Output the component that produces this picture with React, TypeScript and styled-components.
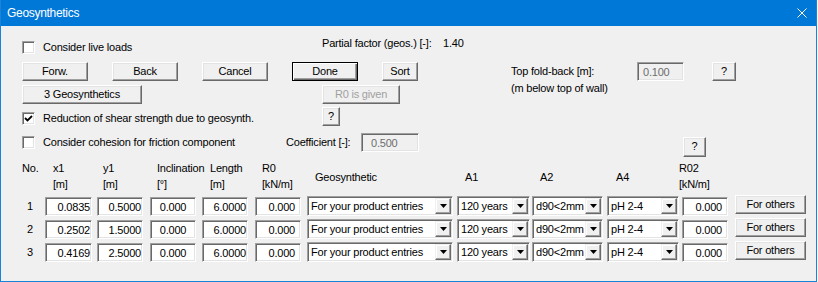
import styled, { createGlobalStyle } from "styled-components";

const GlobalStyle = createGlobalStyle`
  body {
    margin: 0;
    background: #ffffff;
  }
  * {
    box-sizing: border-box;
  }
`;

const COLUMNS = "23px 52px 53px 52px 53px 52px 150px 75px 75px 75px 53px 71px";

const Window = styled.div`
  width: 817px;
  height: 282px;
  display: flex;
  flex-direction: column;
  background: #f0f0f0;
  border: 1px solid #1883d7;
  border-top: none;
  font-family: "Liberation Sans", Arial, sans-serif;
  font-size: 11px;
  letter-spacing: -0.2px;
  color: #000;
  overflow: hidden;
`;

const TitleBar = styled.div`
  height: 26px;
  flex: none;
  display: flex;
  align-items: center;
  padding: 0 9px 0 6px;
  background: #0078d7;
  color: #fff;
`;

const TitleText = styled.span`
  font-size: 12px;
  letter-spacing: -0.3px;
`;

const Close = styled.svg`
  margin-left: auto;
  width: 10px;
  height: 10px;
`;

const Body = styled.div`
  padding: 11px 0 0 21px;
`;

const Row = styled.div<{ $h: number; $mt?: number; $align?: string }>`
  display: flex;
  height: ${(p) => p.$h}px;
  margin-top: ${(p) => p.$mt ?? 0}px;
  align-items: ${(p) => p.$align ?? "center"};
`;

const Caption = styled.div<{ $w?: number; $mt?: number; $top?: boolean }>`
  flex: none;
  align-self: ${(p) => (p.$top ? "flex-start" : "auto")};
  width: ${(p) => (p.$w ? `${p.$w}px` : "auto")};
  margin-top: ${(p) => p.$mt ?? 0}px;
  line-height: 13px;
  white-space: nowrap;
`;

const Note = styled.div<{ $w: number; $ml: number }>`
  flex: none;
  align-self: flex-start;
  width: ${(p) => p.$w}px;
  margin-left: ${(p) => p.$ml}px;
  padding-top: 1px;
  line-height: 17px;
  white-space: nowrap;
`;

const CheckGroup = styled.label<{ $w: number; $mt?: number }>`
  flex: none;
  display: flex;
  align-items: center;
  gap: 8px;
  width: ${(p) => p.$w}px;
  margin-top: ${(p) => p.$mt ?? 0}px;
  line-height: 13px;
  white-space: nowrap;
`;

const Box = styled.span`
  width: 13px;
  height: 13px;
  flex: none;
  display: flex;
  align-items: center;
  justify-content: center;
  background: #fff;
  border: 1px solid;
  border-color: #a0a0a0 #fff #fff #a0a0a0;
  box-shadow: inset 1px 1px #696969, inset -1px -1px #e3e3e3;
`;

const Button = styled.button<{
  $w: number;
  $h?: number;
  $ml?: number;
  $mt?: number;
  $default?: boolean;
}>`
  flex: none;
  width: ${(p) => p.$w}px;
  height: ${(p) => p.$h ?? 19}px;
  margin: ${(p) => p.$mt ?? 0}px 0 0 ${(p) => p.$ml ?? 0}px;
  padding: 0 0 1px;
  font: inherit;
  letter-spacing: inherit;
  line-height: 13px;
  color: #000;
  background: #f0f0f0;
  border: 1px solid;
  border-color: ${(p) =>
    p.$default ? "#000" : "#fff #696969 #696969 #fff"};
  box-shadow: ${(p) =>
    p.$default
      ? "inset 1px 1px #fff, inset -1px -1px #696969, inset -2px -2px #a0a0a0"
      : "inset -1px -1px #a0a0a0, inset 1px 1px #e3e3e3"};
  white-space: nowrap;

  &:disabled {
    color: #a0a0a0;
  }
`;

const Field = styled.div<{
  $w: number;
  $align?: "left" | "right" | "center";
  $pl?: number;
  $pr?: number;
  $disabled?: boolean;
}>`
  flex: none;
  width: ${(p) => p.$w}px;
  height: 19px;
  padding: 1px ${(p) => p.$pr ?? 1}px 0 ${(p) => p.$pl ?? 1}px;
  line-height: 16px;
  text-align: ${(p) => p.$align ?? "right"};
  white-space: nowrap;
  color: ${(p) => (p.$disabled ? "#6d6d6d" : "#000")};
  background: ${(p) => (p.$disabled ? "#f0f0f0" : "#fff")};
  border: 1px solid;
  border-color: #a0a0a0 #fff #fff #a0a0a0;
  box-shadow: inset 1px 1px #696969, inset -1px -1px #e3e3e3;
`;

const Combo = styled.div<{ $w: number }>`
  width: ${(p) => p.$w}px;
  height: 20px;
  margin-top: -1px;
  display: flex;
  padding: 1px;
  background: #fff;
  border: 1px solid;
  border-color: #a0a0a0 #fff #fff #a0a0a0;
  box-shadow: inset 1px 1px #696969, inset -1px -1px #e3e3e3;
`;

const ComboText = styled.span`
  flex: 1;
  padding: 1px 0 0 2px;
  line-height: 15px;
  white-space: nowrap;
  overflow: hidden;
`;

const DropButton = styled.span`
  width: 16px;
  flex: none;
  display: flex;
  align-items: center;
  justify-content: center;
  background: #f0f0f0;
  border: 1px solid;
  border-color: #f0f0f0 #696969 #696969 #f0f0f0;
  box-shadow: inset -1px -1px #a0a0a0, inset 1px 1px #fff;
`;

const HeadRow = styled.div`
  display: grid;
  grid-template-columns: ${COLUMNS};
  height: 32px;
  margin-top: 3px;
`;

const HeadCell = styled.div<{ $pl?: number; $single?: boolean }>`
  align-self: ${(p) => (p.$single ? "center" : "start")};
  padding-left: ${(p) => p.$pl ?? 7}px;
  margin-top: ${(p) => (p.$single ? "1px" : "0")};
  line-height: 16px;
  white-space: nowrap;
`;

const TableRow = styled.div<{ $first?: boolean }>`
  display: grid;
  grid-template-columns: ${COLUMNS};
  height: 19px;
  margin-top: ${(p) => (p.$first ? 5 : 4)}px;
  align-items: start;
`;

const RowNo = styled.div`
  padding-left: 5px;
  line-height: 18px;
`;

const Check = () => (
  <svg width="9" height="9" viewBox="0 0 9 9">
    <polyline points="1,4 3.5,6.5 8,2" fill="none" stroke="#000" strokeWidth="1.8" />
  </svg>
);

const Arrow = () => (
  <svg width="7" height="4" viewBox="0 0 7 4">
    <polygon points="0,0 7,0 3.5,4" fill="#000" />
  </svg>
);

const Select = ({ w, text }: { w: number; text: string }) => (
  <Combo $w={w}>
    <ComboText>{text}</ComboText>
    <DropButton>
      <Arrow />
    </DropButton>
  </Combo>
);

const rows = [
  { no: 1, x1: "0.0835", y1: "0.5000" },
  { no: 2, x1: "0.2502", y1: "1.5000" },
  { no: 3, x1: "0.4169", y1: "2.5000" },
];

const App = () => {
  return (
    <>
      <GlobalStyle />
      <Window>
        <TitleBar>
          <TitleText>Geosynthetics</TitleText>
          <Close viewBox="0 0 10 10">
            <path d="M0.5 0.5 L9.5 9.5 M9.5 0.5 L0.5 9.5" stroke="#fff" strokeWidth="1" />
          </Close>
        </TitleBar>
        <Body>
          <Row $h={20}>
            <CheckGroup $w={300}>
              <Box />
              Consider live loads
            </CheckGroup>
            <Caption $w={121} $top>
              Partial factor (geos.) [-]:
            </Caption>
            <Caption $top>1.40</Caption>
          </Row>

          <Row $h={19} $mt={5}>
            <Button $w={66}>Forw.</Button>
            <Button $w={66} $ml={24}>Back</Button>
            <Button $w={66} $ml={24}>Cancel</Button>
            <Button $w={66} $ml={24} $default>Done</Button>
            <Button $w={36} $ml={24}>Sort</Button>
            <Note $w={126} $ml={93}>
              Top fold-back [m]:
              <br />
              (m below top of wall)
            </Note>
            <Field $w={47} $align="left" $pl={5} $disabled>0.100</Field>
            <Button $w={24} $ml={28}>?</Button>
          </Row>

          <Row $h={19} $mt={4}>
            <Button $w={120}>3 Geosynthetics</Button>
            <Button $w={78} $ml={180} disabled>R0 is given</Button>
          </Row>

          <Row $h={19} $mt={3} $align="flex-start">
            <CheckGroup $w={300} $mt={5}>
              <Box>
                <Check />
              </Box>
              Reduction of shear strength due to geosynth.
            </CheckGroup>
            <Button $w={18}>?</Button>
          </Row>

          <Row $h={24} $mt={7} $align="flex-start">
            <CheckGroup $w={264} $mt={3}>
              <Box />
              Consider cohesion for friction component
            </CheckGroup>
            <Caption $w={75} $mt={3}>Coefficient [-]:</Caption>
            <Field $w={58} $align="left" $pl={9} $disabled>0.500</Field>
            <Button $w={23} $h={20} $ml={264} $mt={4}>?</Button>
          </Row>

          <HeadRow>
            <HeadCell $pl={0}>No.</HeadCell>
            <HeadCell $pl={8}>x1<br />[m]</HeadCell>
            <HeadCell $pl={6}>y1<br />[m]</HeadCell>
            <HeadCell $pl={7}>Inclination<br />[°]</HeadCell>
            <HeadCell $pl={8}>Length<br />[m]</HeadCell>
            <HeadCell $pl={7}>R0<br />[kN/m]</HeadCell>
            <HeadCell $pl={8} $single>Geosynthetic</HeadCell>
            <HeadCell $pl={8} $single>A1</HeadCell>
            <HeadCell $pl={8} $single>A2</HeadCell>
            <HeadCell $pl={9} $single>A4</HeadCell>
            <HeadCell $pl={0} style={{ marginLeft: -3 }}>R02<br />[kN/m]</HeadCell>
          </HeadRow>

          {rows.map((r, i) => (
            <TableRow key={r.no} $first={i === 0}>
              <RowNo>{r.no}</RowNo>
              <Field $w={47}>{r.x1}</Field>
              <Field $w={46}>{r.y1}</Field>
              <Field $w={46} $align="center">0.000</Field>
              <Field $w={46}>6.0000</Field>
              <Field $w={46} $pr={5}>0.000</Field>
              <Select w={146} text="For your product entries" />
              <Select w={73} text="120 years" />
              <Select w={71} text="d90<2mm" />
              <Select w={72} text="pH 2-4" />
              <Field $w={46} $pr={5}>0.000</Field>
              <Button $w={71} $mt={-2}>For others</Button>
            </TableRow>
          ))}
        </Body>
      </Window>
    </>
  );
};

export default App;
